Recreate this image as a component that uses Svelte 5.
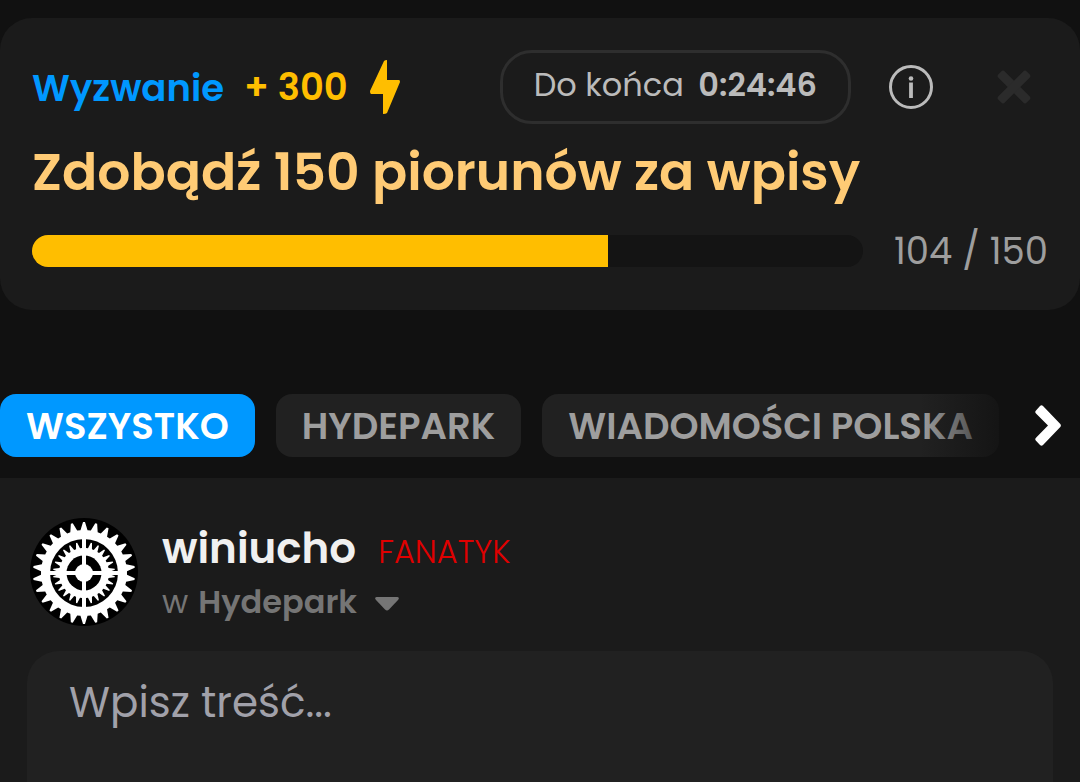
<script lang="ts">
	interface Challenge {
		title: string
		reward: number
		timeLeft: string
		done: number
		goal: number
	}

	const challenge: Challenge = {
		title: 'Zdobądź 150 piorunów za wpisy',
		reward: 300,
		timeLeft: '0:24:46',
		done: 104,
		goal: 150
	}
	const tabs = ['Wszystko', 'Hydepark', 'Wiadomości Polska']

	let visible = $state(true)
	let activeTab = $state('Wszystko')
	let content = $state('')
	let tabList: HTMLElement

	let percent = $derived((challenge.done / challenge.goal) * 100)

	function gear(teeth: number, tip: number, root: number) {
		const step = (Math.PI * 2) / teeth
		const corners = [
			[-0.34, root],
			[-0.08, tip],
			[0.08, tip],
			[0.34, root]
		]
		const points: string[] = []
		for (let i = 0; i < teeth; i++) {
			for (const [offset, radius] of corners) {
				const angle = (i + offset) * step - Math.PI / 2
				points.push(`${(Math.cos(angle) * radius).toFixed(2)},${(Math.sin(angle) * radius).toFixed(2)}`)
			}
		}
		return points.join(' ')
	}

	function scrollTabs() {
		tabList.scrollBy({ left: 300, behavior: 'smooth' })
	}
</script>

<div class="page">
	{#if visible}
		<section class="challenge">
			<header>
				<span class="label">Wyzwanie</span>
				<span class="reward">
					+ {challenge.reward}
					<svg width="30" height="54" viewBox="0 0 30 54" aria-hidden="true">
						<path d="M14 1Q15 0 17 0V20H29Q30 20 30 22L17 53Q16 54 13 54V34H1Q0 34 0 31Z" />
					</svg>
				</span>
				<div class="timer">Do końca <strong>{challenge.timeLeft}</strong></div>
				<button class="info" aria-label="Informacje">
					<svg width="44" height="44" viewBox="0 0 44 44">
						<circle cx="22" cy="22" r="20.5" fill="none" stroke="currentColor" stroke-width="3" />
						<circle cx="22" cy="13.5" r="2.3" fill="currentColor" />
						<path d="M20.1 17.5h3.8v15.5h-3.8z" fill="currentColor" />
					</svg>
				</button>
				<button class="close" aria-label="Zamknij" onclick={() => (visible = false)}>
					<svg width="34" height="34" viewBox="-17 -17 34 34" fill="currentColor">
						<rect x="-20" y="-4.5" width="40" height="9" rx="2.5" transform="rotate(45)" />
						<rect x="-20" y="-4.5" width="40" height="9" rx="2.5" transform="rotate(-45)" />
					</svg>
				</button>
			</header>
			<h2>{challenge.title}</h2>
			<div class="progress">
				<div
					class="track"
					role="progressbar"
					aria-label={challenge.title}
					aria-valuenow={challenge.done}
					aria-valuemax={challenge.goal}
				>
					<div class="fill" style="width: {percent}%"></div>
				</div>
				<span class="count">{challenge.done} / {challenge.goal}</span>
			</div>
		</section>
	{/if}

	<div class="tabs">
		<nav bind:this={tabList}>
			{#each tabs as tab}
				<button class="tab" class:active={tab === activeTab} onclick={() => (activeTab = tab)}>
					{tab}
				</button>
			{/each}
		</nav>
		<button class="next" aria-label="Dalej" onclick={scrollTabs}>
			<svg width="26" height="41" viewBox="0 0 26 41">
				<path
					d="M1 5.5 5 1Q6.5-.5 8 1L25.3 19Q26.5 20.5 25.3 22L8 40Q6.5 41.5 5 40L1 35.8Q-.5 34.3 1 32.8L13 20.5 1 8.5Q-.5 7 1 5.5Z"
					fill="currentColor"
				/>
			</svg>
		</button>
	</div>

	<main>
		<div class="author">
			<svg class="avatar" width="108" height="108" viewBox="-54 -54 108 108" aria-hidden="true">
				<circle r="54" fill="#000" />
				<g transform="translate(0 1)">
					<polygon points={gear(26, 51, 43)} fill="#fff" />
					<circle r="34" fill="#000" />
					<polygon points={gear(26, 31, 25)} fill="#fff" />
					<circle r="17.5" fill="#000" />
					<circle r="9" fill="#fff" />
					<path d="M0-35V35M-35 0H35" stroke="#fff" stroke-width="4" />
				</g>
			</svg>
			<div class="who">
				<div class="name">
					<a href="#winiucho">winiucho</a>
					<span class="rank">Fanatyk</span>
				</div>
				<button class="community">
					w <strong>Hydepark</strong>
					<svg width="24" height="14" viewBox="0 0 24 14" aria-hidden="true">
						<path d="M1.5 0H22.5Q25 .5 23 3L14 12.5Q12 14.5 10 12.5L1 3Q-1 .5 1.5 0Z" fill="currentColor" />
					</svg>
				</button>
			</div>
		</div>
		<textarea bind:value={content} placeholder="Wpisz treść..." aria-label="Treść wpisu"></textarea>
	</main>
</div>

<style>
	:global(body) {
		background: #111;
	}

	.page {
		display: flex;
		flex-direction: column;
		box-sizing: border-box;
		min-height: 100vh;
		padding-top: 18px;
		font-family: Poppins, Inter, sans-serif;
		color: #9e9e9e;
	}

	button {
		padding: 0;
		border: 0;
		background: none;
		font: inherit;
		color: inherit;
		cursor: pointer;
	}

	svg {
		display: block;
		flex: none;
	}

	.challenge {
		padding: 32px 32px 43px;
		border-radius: 32px;
		background: #1b1b1b;
	}

	header {
		display: flex;
		align-items: center;
		font-size: 37px;
		font-weight: 600;
		white-space: nowrap;
	}

	.label {
		padding-top: 2px;
		color: #0098ff;
	}

	.reward {
		display: flex;
		align-items: center;
		gap: 22px;
		margin-left: 20px;
		color: #ffbe00;
	}

	.reward svg {
		fill: #ffbe00;
	}

	.timer {
		margin-left: auto;
		padding: 12px 31px 16px;
		border: 3px solid #2e2e2e;
		border-radius: 32px;
		font-size: 32px;
		font-weight: 400;
		line-height: 40px;
		color: #bbb;
	}

	.timer strong {
		margin-left: 6px;
		font-weight: 600;
	}

	.info {
		margin-left: 38px;
		color: #bbb;
	}

	.close {
		margin: 0 17px 0 64px;
		color: #2b2b2b;
	}

	h2 {
		margin: 13px 0 28px;
		font-size: 52px;
		font-weight: 600;
		line-height: 70px;
		color: #ffcb75;
	}

	.progress {
		display: flex;
		align-items: center;
		gap: 31px;
	}

	.track {
		flex: 1;
		height: 32px;
		border-radius: 16px;
		overflow: hidden;
		background: #141414;
	}

	.fill {
		height: 100%;
		background: #ffbe00;
	}

	.count {
		font-size: 37px;
		line-height: 32px;
		white-space: nowrap;
	}

	.tabs {
		position: relative;
		margin: 84px 0 21px;
	}

	nav {
		display: flex;
		gap: 21px;
		overflow: hidden;
	}

	.tab {
		flex: none;
		padding: 1px 26px 0;
		border-radius: 16px;
		background: #212121;
		font-size: 37px;
		font-weight: 600;
		line-height: 62px;
		text-transform: uppercase;
	}

	.tab.active {
		background: #0098ff;
		color: #fff;
	}

	.next {
		position: absolute;
		inset: 0 0 0 auto;
		display: flex;
		align-items: center;
		justify-content: flex-end;
		width: 160px;
		padding-right: 19px;
		background: linear-gradient(to right, transparent, #111 64%);
		color: #fff;
	}

	main {
		display: flex;
		flex: 1;
		flex-direction: column;
		padding: 40px 27px 0;
		background: #1b1b1b;
	}

	.author {
		display: flex;
		align-items: flex-start;
		gap: 24px;
		padding-left: 3px;
	}

	.who {
		padding-top: 4px;
	}

	.name {
		display: flex;
		align-items: baseline;
		gap: 22px;
		line-height: 54px;
	}

	.name a {
		font-size: 42px;
		font-weight: 600;
		color: #f0f0f0;
		text-decoration: none;
	}

	.rank {
		font-size: 32px;
		font-weight: 300;
		color: #e00000;
		text-transform: uppercase;
	}

	.community {
		display: flex;
		align-items: center;
		gap: 10px;
		font-size: 32px;
		line-height: 46px;
		color: #757575;
	}

	.community strong {
		font-weight: 600;
	}

	.community svg {
		margin: 4px 0 0 8px;
	}

	textarea {
		flex: 1;
		min-height: 88px;
		margin-top: 25px;
		padding: 22px 42px;
		border: 0;
		border-radius: 32px 32px 0 0;
		outline: 0;
		resize: none;
		background: #212121;
		font: inherit;
		font-size: 42px;
		line-height: 60px;
		color: #f0f0f0;
	}

	textarea::placeholder {
		color: #a1a1aa;
	}
</style>
